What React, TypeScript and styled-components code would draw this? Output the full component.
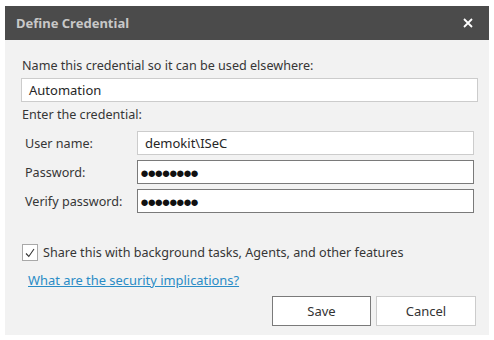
import React from "react";
import styled, { createGlobalStyle } from "styled-components";

const Global = createGlobalStyle`
  html, body { margin: 0; padding: 0; background: #ffffff; }
  body { font-family: "Noto Sans", "Open Sans", sans-serif; }
`;

const Dialog = styled.div`
  margin: 6px 0 0 5px;
  width: 484px;
  height: 329px;
  display: flex;
  flex-direction: column;
  background: #f2f2f2;
`;

const TitleBar = styled.div`
  height: 34px;
  flex: none;
  background: #4b4b4b;
  display: flex;
  align-items: center;
  justify-content: space-between;
  padding: 0 16px 0 11px;
`;

const Title = styled.span`
  color: #c8c8c8;
  font-size: 13px;
  font-weight: 700;
`;

const Close = styled.span`
  display: flex;
  width: 10px;
  height: 10px;
  color: #ffffff;
`;

const Body = styled.div`
  flex: 1;
  display: flex;
  flex-direction: column;
  padding: 18px 12px 0 16px;
  color: #363636;
  font-size: 12.6px;
`;

const Label = styled.div<{ $mt?: number }>`
  line-height: 16px;
  margin-top: ${(p) => p.$mt ?? 0}px;
  padding-left: 1px;
`;

const Field = styled.div<{ $dark?: boolean; $mt?: number; $w?: number }>`
  box-sizing: border-box;
  height: 24px;
  width: ${(p) => p.$w ?? 455}px;
  margin-top: ${(p) => p.$mt ?? 0}px;
  background: #ffffff;
  border: 1px solid ${(p) => (p.$dark ? "#7a7a7a" : "#cccccc")};
  display: flex;
  align-items: center;
  padding-left: 7px;
  font-size: 13px;
  color: #262626;
`;

const Dots = styled.span`
  font-size: 15px;
  letter-spacing: -1.9px;
  color: #111;
  margin-left: -5px;
  line-height: 1;
`;

const Rows = styled.div`
  display: flex;
  flex-direction: column;
  gap: 5px;
  margin-top: 8px;
`;

const Row = styled.div`
  display: grid;
  grid-template-columns: 116px 337px;
  align-items: center;
`;

const RowLabel = styled.span`
  padding-left: 4px;
`;

const CheckRow = styled.label`
  display: flex;
  align-items: center;
  gap: 5px;
  margin-top: 31px;
  padding-left: 1px;
`;

const Box = styled.span`
  box-sizing: border-box;
  width: 16px;
  height: 17px;
  border: 1px solid #a8a8a8;
  background: #ffffff;
  display: flex;
  align-items: center;
  justify-content: center;
`;

const Link = styled.a`
  margin-top: 11px;
  margin-left: 7px;
  color: #2a8cc6;
  text-decoration: underline;
  font-size: 12.9px;
  line-height: 16px;
  align-self: flex-start;
`;

const Buttons = styled.div`
  display: flex;
  justify-content: flex-end;
  gap: 5px;
  margin-top: 8px;
  padding-right: 1px;
`;

const Button = styled.button<{ $primary?: boolean }>`
  box-sizing: border-box;
  width: ${(p) => (p.$primary ? 99 : 100)}px;
  height: 30px;
  background: #ffffff;
  border: 1px solid ${(p) => (p.$primary ? "#7a7a7a" : "#cccccc")};
  font-family: inherit;
  font-size: 13px;
  color: #333;
  padding: 0;
`;

export default function App() {
  return (
    <>
      <Global />
      <Dialog>
        <TitleBar>
          <Title>Define Credential</Title>
          <Close>
            <svg width="10" height="10" viewBox="0 0 10 10">
              <path d="M1 1 L9 9 M9 1 L1 9" stroke="currentColor" strokeWidth="1.8" />
            </svg>
          </Close>
        </TitleBar>
        <Body>
          <Label>Name this credential so it can be used elsewhere:</Label>
          <Field $mt={4} $w={457}>Automation</Field>
          <Label $mt={5}>Enter the credential:</Label>
          <Rows>
            <Row>
              <RowLabel>User name:</RowLabel>
              <Field $w={337}>demokit\ISeC</Field>
            </Row>
            <Row>
              <RowLabel>Password:</RowLabel>
              <Field $dark $w={337}>
                <Dots>●●●●●●●●</Dots>
              </Field>
            </Row>
            <Row>
              <RowLabel>Verify password:</RowLabel>
              <Field $dark $w={337}>
                <Dots>●●●●●●●●</Dots>
              </Field>
            </Row>
          </Rows>
          <CheckRow>
            <Box>
              <svg width="10" height="10" viewBox="0 0 10 10">
                <path d="M1 5.5 L3.8 8.5 L9 1" fill="none" stroke="#333" strokeWidth="1.1" />
              </svg>
            </Box>
            <span>Share this with background tasks, Agents, and other features</span>
          </CheckRow>
          <Link href="#">What are the security implications?</Link>
          <Buttons>
            <Button $primary>Save</Button>
            <Button>Cancel</Button>
          </Buttons>
        </Body>
      </Dialog>
    </>
  );
}
